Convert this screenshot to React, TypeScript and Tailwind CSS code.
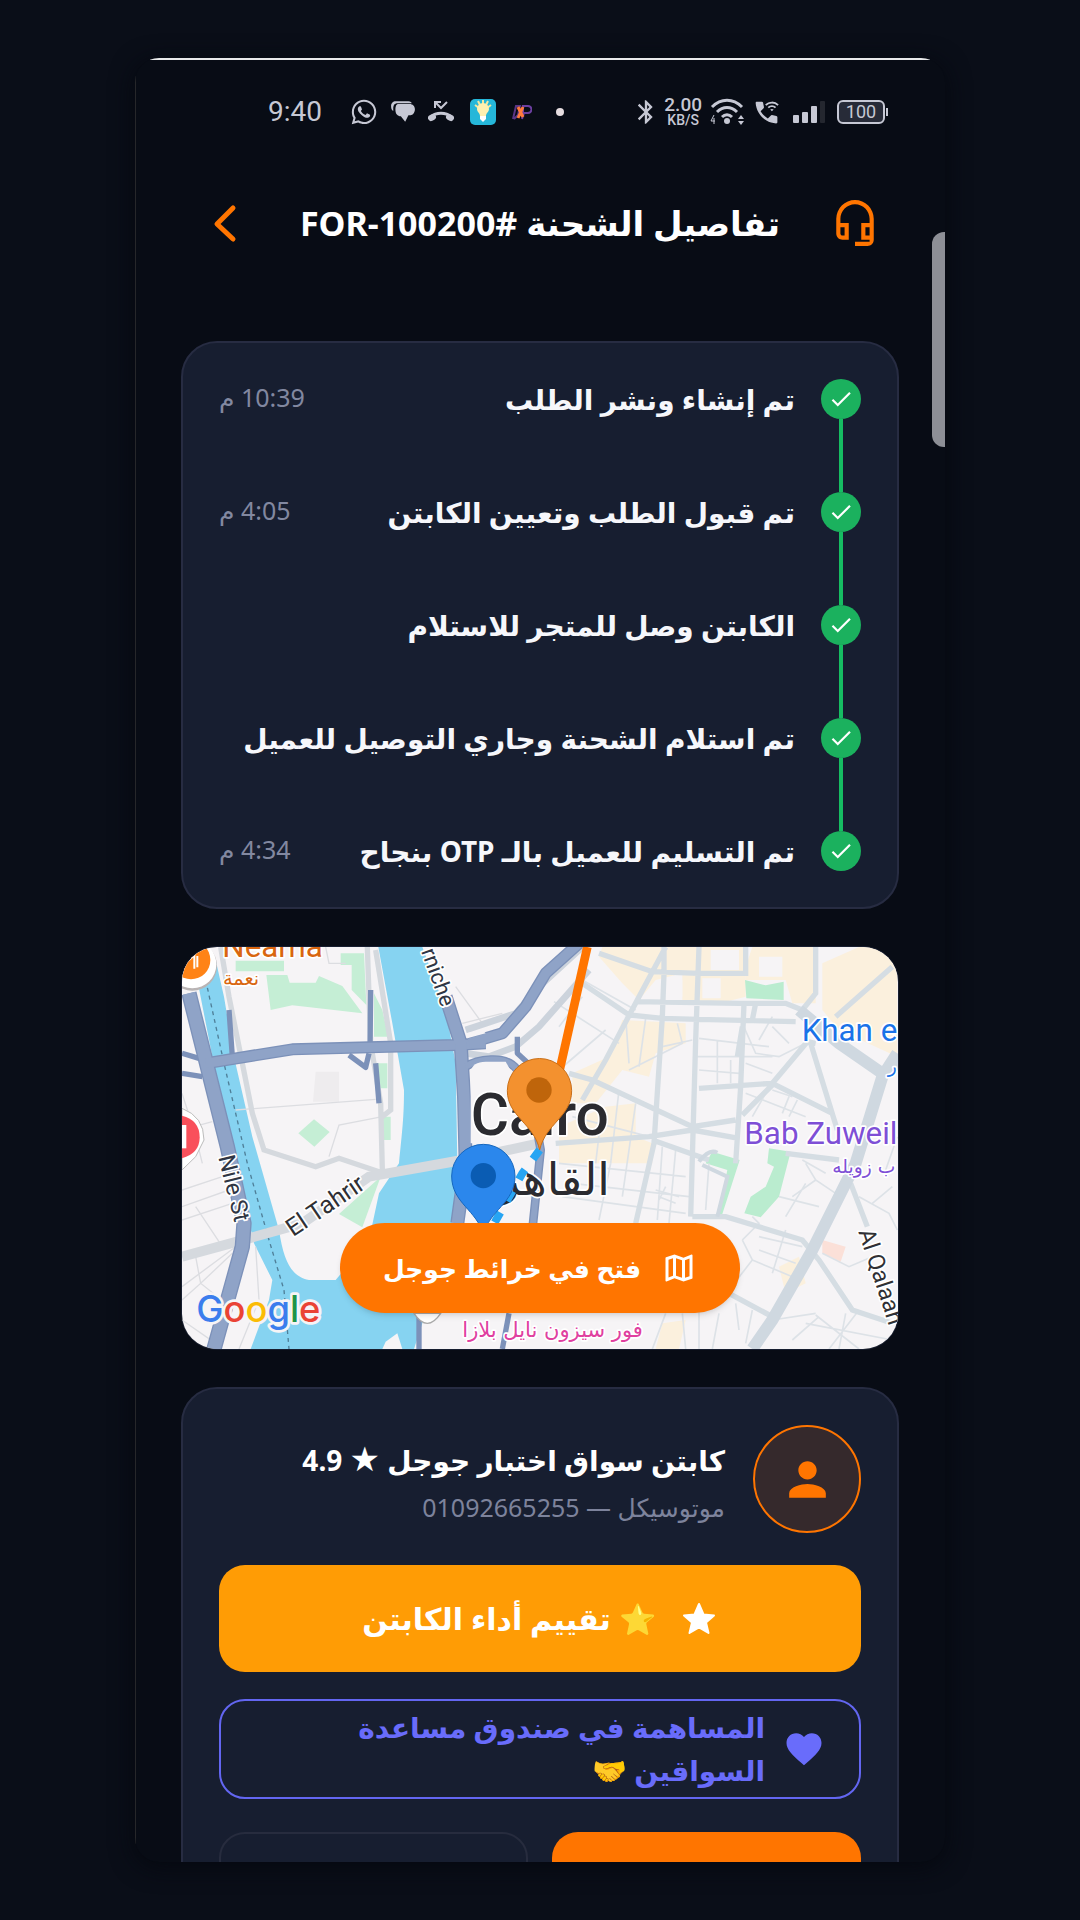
import type { ReactNode } from "react";
import {
  MdBluetooth,
  MdCheck,
  MdFavorite,
  MdOutlineHeadsetMic,
  MdOutlineMap,
  MdPerson,
  MdWifiCalling3,
} from "react-icons/md";
import { FaWhatsapp } from "react-icons/fa";

type Step = {
  label: string;
  time?: string;
};

const steps: Step[] = [
  { label: "تم إنشاء ونشر الطلب", time: "10:39 م" },
  { label: "تم قبول الطلب وتعيين الكابتن", time: "4:05 م" },
  { label: "الكابتن وصل للمتجر للاستلام" },
  { label: "تم استلام الشحنة وجاري التوصيل للعميل" },
  { label: "تم التسليم للعميل بالـ OTP بنجاح", time: "4:34 م" },
];

function StatusBar() {
  return (
    <div
      dir="ltr"
      className="flex h-10 items-center justify-between pl-[87px] pr-[11px] text-[#c6c8d4]"
    >
      <div className="flex items-center gap-3">
        <span className="mr-4 text-[28px] leading-8 font-[Roboto]">9:40</span>
        <FaWhatsapp className="size-[28px]" />
        {/* Mensajes */}
        <svg viewBox="0 0 24 24" className="size-[26px]" fill="currentColor">
          <path d="M5 2h12c2 0 3 1 3 2H7C4 4 3 6 3 9v2C1 10 1 8 1 6c0-2 2-4 4-4z" />
          <path d="M8 4.500h10c3 0 5 2 5 5s-2 5.500-4 5.500h-2l-3 6-4-5c-3 0-5-2-5-6s1-5.500 3-5.500z" />
        </svg>
        {/* Llamada perdida */}
        <svg
          viewBox="0 0 26 24"
          className="h-[24px] w-[26px]"
          fill="none"
          stroke="currentColor"
        >
          <path strokeWidth="2" d="M7 8V2h6M7 2l6 6 6-6" />
          <path strokeWidth="3" d="M3 17c5-5 15-5 20 0" />
          <path strokeWidth="6" strokeLinecap="round" d="M3 18l2-1M23 18l-2-1" />
        </svg>
        <svg viewBox="0 0 26 26" className="ml-1 size-[26px]">
          <rect width="26" height="26" rx="5" fill="#25b7d9" />
          <path
            d="M5 6l4 3M21 6l-4 3M8 2l2 4M18 2l-2 4M13 1v4"
            stroke="#f3e7a0"
            strokeWidth="2"
          />
          <path d="M7 10a6 6 0 0 1 12 0c0 3-3 4-3 7h-6c0-3-3-4-3-7z" fill="#fdf0b0" />
          <path d="M10 17h6v3l-3 3-3-3z" fill="#fff" />
        </svg>
        <svg viewBox="0 0 20 18" className="ml-1 h-[18px] w-[20px]" fill="none">
          <path d="M1 16L4 3h4L6 12l-4 4" stroke="#5a3585" strokeWidth="2" />
          <path d="M11 11V3h5a3 3 0 0 1 0 7h-4l-2 6" stroke="#6b3fa0" strokeWidth="2" />
          <path d="M6 4l5 10M11 4L6 15" stroke="#ff7a3c" strokeWidth="3" />
        </svg>
        <span className="ml-3 size-2 rounded-full bg-[#e6dde0]" />
      </div>

      <div className="flex items-center gap-2">
        <MdBluetooth className="-mr-1 size-[28px]" />
        <div className="flex flex-col items-center font-[Roboto] font-medium">
          <span className="text-[19px] leading-4">2.00</span>
          <span className="text-[14px] leading-[14px]">KB/S</span>
        </div>
        <svg viewBox="0 0 34 28" className="h-[28px] w-[34px]" fill="none">
          <g stroke="currentColor" strokeWidth="3">
            <path d="M2 9c9-9 21-9 30 0" />
            <path d="M7 14c6-6 14-6 20 0" />
            <path d="M12 19c3-3 7-3 10 0" />
          </g>
          <circle cx="17" cy="23" r="3" fill="currentColor" />
          <path d="M28 21l3-4 3 4zM28 23l3 4 3-4z" fill="currentColor" />
          <path d="M4 17l-3 6h4M4 20v6" stroke="currentColor" strokeWidth="1" />
        </svg>
        <MdWifiCalling3 className="size-[29px]" />
        <svg viewBox="0 0 32 24" className="ml-1 h-[24px] w-[32px]" fill="currentColor">
          <rect y="15" width="6" height="8" rx="1" />
          <rect x="9" y="12" width="6" height="11" rx="1" />
          <rect x="18" y="6" width="6" height="17" rx="1" />
          <rect x="27" y="1" width="5" height="22" rx="1" fill="#24272f" />
        </svg>
        <div className="ml-1 flex items-center">
          <div className="flex h-[24px] w-[48px] items-center justify-center rounded-md border-2 border-current bg-[#272b38] text-[18px] leading-5 font-[Roboto]">
            100
          </div>
          <span className="ml-px h-2 w-0.5 bg-current" />
        </div>
      </div>
    </div>
  );
}

function Header() {
  return (
    <header className="flex h-[54px] items-center justify-between px-[19px]">
      <a href="#support" aria-label="الدعم" className="text-[#ff7500]">
        <MdOutlineHeadsetMic className="size-[50px]" />
      </a>
      <h1 className="text-[34px] leading-10 font-bold whitespace-nowrap text-white">
        تفاصيل الشحنة #FOR-100200
      </h1>
      <button type="button" aria-label="رجوع" className="text-[#ff7500]">
        <svg
          viewBox="0 0 50 50"
          className="size-[50px]"
          fill="none"
          stroke="currentColor"
          strokeWidth="5"
          strokeLinecap="round"
          strokeLinejoin="round"
        >
          <path d="M33 10L17 26l16 15" />
        </svg>
      </button>
    </header>
  );
}

function Card({ children }: { children: ReactNode }) {
  return (
    <section className="rounded-[36px] border-2 border-[#272c42] bg-[#171e30] p-[36px]">
      {children}
    </section>
  );
}

function Timeline() {
  return (
    <Card>
      <ol>
        {steps.map((step, index) => (
          <li key={step.label} className="flex gap-[26px]">
            <div className="flex flex-col items-center">
              <span className="flex size-10 items-center justify-center rounded-full bg-[#1bb15e] text-white">
                <MdCheck className="size-[26px]" />
              </span>
              {index < steps.length - 1 && (
                <span className="h-[73px] w-1 bg-[#16bd62]" />
              )}
            </div>
            <p className="flex h-10 flex-1 items-center text-[28px] leading-10 font-bold whitespace-nowrap text-[#f6f7fb]">
              {step.label}
            </p>
            {step.time && (
              <time className="flex h-9 items-center text-[25px] leading-8 whitespace-nowrap text-[#8288a0]">
                {step.time}
              </time>
            )}
          </li>
        ))}
      </ol>
    </Card>
  );
}

function CityMap() {
  return (
    <svg
      viewBox="39 51 2148 1206"
      preserveAspectRatio="xMidYMid slice"
      className="block aspect-[716/402] w-full"
      fill="none"
      direction="ltr"
    >
      <rect x="39" y="51" width="2148" height="1206" fill="#f6f4f6" />

      {/* Zonas comerciales */}
      <g fill="#fbf0dd" transform="translate(1110 0)">
        <path d="M190 51H620V200L560 215H430V130L350 150L300 210L250 160L180 80z" />
        <path d="M640 51H830V220H760L740 150H620V110z" />
        <path d="M850 100L960 51H1075V380L900 300L850 240z" />
        <path d="M250 270L440 280V340L350 370L330 440L250 420L170 520H100V430L210 380z" />
        <path d="M200 530L290 520V620L340 640V700H60V590z" />
        <path d="M370 1180L440 1170L420 1257H350z" />
        <path d="M720 1010L780 980L800 1060L740 1090z" />
        <path d="M850 930L920 950L905 995L850 970z" fill="#fbe0d8" />
      </g>
      <g fill="#f6f4f6" transform="translate(1110 0)">
        <path d="M515 60H600V120H515zM380 160L430 150V200H380zM490 145H545V205H490zM660 80H730V140H660z" />
      </g>

      {/* Parques */}
      <g fill="#c5eed5">
        <path d="M200 92H345V124H200zM292 135H355L362 158H440L450 138L520 168L580 250L370 226L305 240z" />
        <path d="M515 70H585L592 225L548 180V105H515zM615 190L640 240L658 320H615zM620 400H655V475H625zM640 560H665V630H645z" />
        <path d="M435 568L482 606L436 650L388 610z" />
        <path d="M635 740L580 892L510 852z" />
      </g>
      <g fill="#baeccf" transform="translate(1110 0)">
        <path d="M618 150L680 166L734 155V210L622 205z" />
        <path d="M520 665L602 690L550 852H538L565 720L500 700z" />
        <path d="M690 655L755 665L720 800L665 862L616 850L635 800L680 770L705 710L685 700z" />
      </g>
      <path d="M440 425H510V515H432z" fill="#eeecee" />

      {/* Nilo */}
      <path
        d="M85 150L140 90L165 200L195 380L250 620L330 900C345 1000 370 1040 420 1050H500L600 930L630 790L690 700C700 600 705 560 705 480L670 280L628 51H760L830 240L860 400L865 700L850 880L760 1180L735 1257H245L300 1110L310 1050L255 940L180 620L130 380z"
        fill="#86d3f1"
      />
      <path d="M640 1257L650 1235L685 1210L700 1257z" fill="#f6f4f6" />
      <path
        d="M110 150L165 400L235 700L300 930L345 1080L360 1257"
        stroke="#4f7f98"
        strokeWidth="4"
        strokeDasharray="12 12"
      />

      {/* Calles menores */}
      <g stroke="#dcdde1" strokeWidth="4">
        <path d="M200 540L620 508M640 560L510 585L480 680M39 490L75 600L100 700M75 590L130 575M39 780L160 740M39 830L180 780M39 870L190 820M80 830L160 950M39 1070L200 950M95 1060L190 970M95 1060L80 980M39 1110L95 1060L170 1120M39 1170L140 1240M260 950L270 1110L210 1257M860 170L940 280M880 280L1000 250M470 51L480 100H530" />
      </g>
      <g stroke="#dde2e7" strokeWidth="5" transform="translate(1110 0)">
        <path d="M45 215L240 340M130 150L290 240M60 290L130 200M60 420L200 300M260 260L270 400M320 265L300 410M415 280L430 340L270 420M370 350L460 330M470 380H700M480 325L690 350M480 420L600 430M535 330V460M575 390V460M610 280L650 370L720 380L800 340M660 330L700 260M700 290L750 340M620 400L700 430M620 490L800 560M680 490L640 560M700 480L760 500M775 510L750 560M750 500L730 550" />
        <path d="M190 530L170 700M240 480L215 700M290 520L250 800M100 560L330 620M60 700L440 740M100 760L450 800M70 800L440 850M215 700L180 870M370 650L355 870M410 660L390 880M510 700L500 840M350 780L420 800M360 800L410 820M380 770L360 810" />
        <path d="M610 930L660 880L640 860M610 930L640 990L570 1080M660 920L790 950M660 960L770 1000M640 990L760 1040M740 900L700 1030M540 1150L520 1257M380 1150L340 1257M430 1150L440 1257M480 1130V1257M590 1120L600 1200M640 1140L620 1240M700 1170L830 1150M830 1155L960 1257M960 1140L870 1257M920 1150L900 1257M800 1180L1060 1230M760 1230L840 1160M800 700L830 750L890 790M830 750L760 800M790 690L860 730M720 800L840 830M740 860L800 760M960 800L1050 850L1075 900M1000 820L1060 770M850 970L930 1010L1000 980M1075 620L1040 720" />
      </g>

      {/* Avenidas */}
      <g stroke="#d5dde3" strokeWidth="16" transform="translate(1110 0)">
        <path d="M180 70L340 125L480 130H620V51M480 51L470 330L455 860M375 51V130L370 260L345 640L290 880M290 215L600 220H740L790 240L830 190V51M130 160L270 255L370 265L480 268L770 275M380 51L300 200L200 390L130 510M615 220L605 470L590 700M650 220L640 270M610 290L595 380M90 430L160 450L460 590L590 570M50 640L330 620L460 600M340 630L510 690M480 475L700 460L805 335L830 340M700 460L880 550M610 555L700 465M815 340L895 600M890 260L1060 110M460 860H560L790 930L840 990L940 1140L1060 1180M460 600L600 625M740 670L900 690M935 760L985 890M570 1090L700 1160" />
      </g>
      <g stroke="#cfd8e0" strokeWidth="36" transform="translate(1110 0)">
        <path d="M780 240L900 340L1030 430L1075 400" />
        <path d="M1075 370L1030 440L950 700L820 960L700 1170L640 1257" />
      </g>
      <path
        d="M1590 695Q1620 655 1645 668M1645 860L1675 740L1600 705"
        stroke="#cfd8e0"
        strokeWidth="12"
      />
      <g stroke="#d5d9de" strokeWidth="16">
        <path d="M155 51L180 200L250 550L285 660L440 710L510 685L630 725M595 51L605 340L635 520L640 720M620 60L665 340V540L640 560" />
        <path strokeWidth="30" d="M39 980L240 925L400 880L600 740L880 690L1110 640" />
      </g>
      <path
        d="M890 300L1040 250L1110 170L1240 51M890 370L960 380L1040 350L1110 290L1260 120"
        stroke="#ccd3dc"
        strokeWidth="20"
      />

      {/* Autopistas */}
      <g stroke="#7c91b9" strokeLinejoin="round">
        <path strokeWidth="46" d="M60 190L110 390L175 650L225 880L220 950L135 1257" />
        <path strokeWidth="36" d="M110 400L370 358L600 352L860 345L950 340" />
        <path strokeWidth="42" d="M830 200L875 340L885 500L890 700L865 880" />
        <path strokeWidth="36" d="M900 340L1000 310L1070 230L1130 130L1230 40" />
        <path strokeWidth="16" d="M605 180L603 360M620 400L630 520M180 240L190 380M540 375L590 412L600 370M39 370L90 385M39 430L100 440M1045 320V370L1110 430M750 1150V1257M1020 1150L1000 1257" />
        <path strokeWidth="26" d="M890 410C920 390 1010 370 1045 420L1090 520L1115 660L1090 900" />
      </g>
      <g stroke="#8fa3c7" strokeLinejoin="round">
        <path strokeWidth="38" d="M60 190L110 390L175 650L225 880L220 950L135 1257" />
        <path strokeWidth="28" d="M110 400L370 358L600 352L860 345L950 340" />
        <path strokeWidth="34" d="M830 200L875 340L885 500L890 700L865 880" />
        <path strokeWidth="28" d="M900 340L1000 310L1070 230L1130 130L1230 40" />
        <path strokeWidth="18" d="M890 410C920 390 1010 370 1045 420L1090 520L1115 660L1090 900" />
      </g>
      <path d="M905 425Q910 395 950 395H1010L1030 430V640L905 640z" fill="#f6f4f6" />
      <path d="M890 310L940 300L950 310L895 325z" fill="#f6f4f6" />

      {/* Marcadores de lugares */}
      <circle cx="70" cy="108" r="74" fill="#b9b4b4" />
      <circle cx="70" cy="103" r="72" fill="#fff" />
      <circle cx="66" cy="90" r="58" fill="#ff8316" />
      <path d="M60 90L76 76V116M85 78V112" stroke="#fff" strokeWidth="6" />
      <path d="M39 535Q105 560 105 630L80 680L39 720z" fill="#fff" stroke="#bbb" strokeWidth="3" />
      <path d="M39 557Q92 570 92 622Q92 670 39 685z" fill="#f9505b" />
      <path d="M45 585V655" stroke="#fff" strokeWidth="14" />
      <path d="M735 1150Q775 1210 815 1150z" fill="#fff" stroke="#aaa" strokeWidth="4" />

      {/* Rótulos */}
      <g
        className="font-[Roboto]"
        stroke="#fff"
        strokeWidth="10"
        strokeLinejoin="round"
        paintOrder="stroke"
      >
        <text x="160" y="82" fontSize="94" fill="#d9660f">Neama</text>
        <text x="162" y="164" fontSize="58" fill="#d9660f" fontFamily="DejaVu Sans">نعمة</text>
        <text transform="translate(756 64) rotate(70)" fontSize="66" fill="#2f3644">rniche</text>
        <text transform="translate(148 682) rotate(76)" fontSize="70" fill="#2f3644">Nile St</text>
        <text transform="translate(372 922) rotate(-34)" fontSize="74" fill="#2f3034">El Tahrir</text>
        <text x="905" y="614" fontSize="176" fontWeight="500" fill="#2b2b30">Cairo</text>
        <text x="915" y="794" fontSize="136" fill="#2b2b30" fontFamily="DejaVu Sans">القاهرة</text>
        <text x="1898" y="332" fontSize="94" fill="#1a73e8">Khan e</text>
        <text x="2156" y="425" fontSize="56" fill="#1a73e8" fontFamily="DejaVu Sans">ر</text>
        <text x="1726" y="642" fontSize="94" fill="#7e4fd6">Bab Zuweil</text>
        <text x="1990" y="728" fontSize="56" fill="#7e4fd6" fontFamily="DejaVu Sans">ب زويله</text>
        <text transform="translate(2068 905) rotate(72)" fontSize="70" fill="#2f3034">Al Qalaah</text>
        <text x="880" y="1222" fontSize="63" fill="#e0409f" fontFamily="DejaVu Sans">فور سيزون نايل بلازا</text>
      </g>

      {/* Ruta y pines */}
      <path d="M1255 51L1172 420" stroke="#ff7500" strokeWidth="26" />
      <path
        d="M1112 660L1060 730L970 890"
        stroke="#27a5f3"
        strokeWidth="24"
        strokeDasharray="34 40"
      />
      <path
        d="M1112 660C1095 580 1015 560 1015 482A96 96 0 0 1 1208 482C1208 560 1130 580 1112 660z"
        fill="#f3912f"
        stroke="#c96f17"
        strokeWidth="3"
      />
      <circle cx="1110" cy="480" r="38" fill="#bf650b" />
      <path
        d="M943 915C925 840 848 820 848 738A95 95 0 0 1 1038 738C1038 820 960 840 943 915z"
        fill="#2b87ec"
        stroke="#1667be"
        strokeWidth="3"
      />
      <circle cx="943" cy="737" r="38" fill="#0a5cb3" />

      <text
        x="82"
        y="1176"
        fontSize="109"
        fontFamily="Inter"
        fontWeight="500"
        stroke="#f6f4f6"
        strokeWidth="16"
        strokeLinejoin="round"
        paintOrder="stroke"
      >
        <tspan fill="#3b7ded">G</tspan>
        <tspan fill="#ea4335">o</tspan>
        <tspan fill="#fbbc05">o</tspan>
        <tspan fill="#3b7ded">g</tspan>
        <tspan fill="#1e9447">l</tspan>
        <tspan fill="#ea4335">e</tspan>
      </text>
    </svg>
  );
}

function MapCard() {
  return (
    <section className="relative overflow-hidden rounded-[36px] border border-[#171e30]">
      <CityMap />
      <a
        href="#map"
        className="absolute inset-x-0 bottom-[36px] mx-auto flex h-[90px] w-[400px] items-center justify-center gap-5 rounded-full bg-[#ff7500] text-[25px] leading-10 font-bold whitespace-nowrap text-white shadow-md"
      >
        <MdOutlineMap className="size-[36px]" />
        فتح في خرائط جوجل
      </a>
    </section>
  );
}

function CaptainCard() {
  return (
    <Card>
      <div className="flex gap-7">
        <div className="flex size-[108px] items-center justify-center rounded-full border-2 border-[#ff7500] bg-[#35292c] text-[#ff7500]">
          <MdPerson className="size-[55px]" />
        </div>
        <div className="pt-[10px] whitespace-nowrap">
          <h2 className="text-[28px] leading-[50px] font-bold text-white">
            كابتن سواق اختبار جوجل{" "}
            <span className="text-[34px] leading-8">★</span> 4.9
          </h2>
          <p className="text-[25px] leading-[44px] text-[#7d839c]">
            موتوسيكل — 01092665255
          </p>
        </div>
      </div>

      <button
        type="button"
        className="mt-8 flex h-[107px] w-full items-center justify-center gap-6 rounded-[26px] bg-[#ff9c05] text-[30px] leading-10 font-bold text-white"
      >
        <svg
          viewBox="0 0 38 38"
          className="size-[38px]"
          fill="currentColor"
          stroke="currentColor"
          strokeWidth="2"
          strokeLinejoin="round"
        >
          <path d="M19 4l4.500 10.500L34 15.500l-8 7L28.500 33 19 27.500 9.500 33 12 22.500l-8-7 10.500-1z" />
        </svg>
        <span>⭐ تقييم أداء الكابتن</span>
      </button>

      <button
        type="button"
        className="mt-[27px] flex w-full items-center gap-[18px] rounded-[26px] border-2 border-[#6366f1] px-[34px] py-[5px] text-right text-[28px] leading-[43px] font-bold text-[#696cfb]"
      >
        <MdFavorite className="size-[42px]" />
        <span>
          المساهمة في صندوق مساعدة
          <br />
          السواقين 🤝
        </span>
      </button>

      <div className="mt-[33px] grid grid-cols-2 gap-6">
        <button
          type="button"
          aria-label="اتصال"
          className="h-[107px] rounded-[26px] bg-[#ff7500]"
        />
        <button
          type="button"
          aria-label="محادثة"
          className="h-[107px] rounded-[26px] border-2 border-[#272c3e]"
        />
      </div>
    </Card>
  );
}

export default function App() {
  return (
    <div className="h-screen bg-[#0a0e18] py-[58px] font-['Noto_Sans','DejaVu_Sans',sans-serif]">
      <main
        dir="rtl"
        className="relative mx-auto h-full w-3/4 overflow-hidden rounded-3xl bg-[#080c15] shadow-[0_4px_24px_#05080f]"
      >
        {/* Bordes del dispositivo */}
        <span className="absolute inset-x-[15px] top-0 h-0.5 bg-[#e8e9ea]" />
        <span className="absolute inset-y-4 left-0 w-px bg-[#26272a]" />
        {/* Barra de desplazamiento */}
        <span className="absolute top-[174px] right-0 h-[215px] w-[13px] rounded-l-xl bg-[#8d8f96]" />

        <div className="px-[46px] pt-[34px]">
          <StatusBar />
          <div className="mt-16 mb-[91px]">
            <Header />
          </div>
          <div className="flex flex-col gap-[37px]">
            <Timeline />
            <MapCard />
            <CaptainCard />
          </div>
        </div>
      </main>
    </div>
  );
}
